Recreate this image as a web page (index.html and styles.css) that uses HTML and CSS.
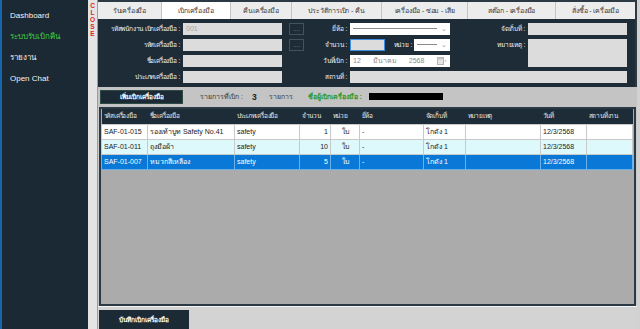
FILE: index.html
```html
<!DOCTYPE html>
<html lang="th">
	<head>
		<meta charset="UTF-8" />
		<meta name="viewport" content="width=device-width, initial-scale=1.0" />
		<title>เบิกเครื่องมือ</title>
		<link rel="stylesheet" href="styles.css">
	</head>
	<body>
		<div class="app">
			<!-- เมนูด้านซ้าย -->
			<aside class="sidebar">
				<a href="#" class="side-link">Dashboard</a>
				<a href="#" class="side-link active">ระบบรับเบิกคืน</a>
				<a href="#" class="side-link">รายงาน</a>
				<a href="#" class="side-link">Open Chat</a>
			</aside>

			<div class="close-strip">
				<span>C</span><span>L</span><span>O</span><span>S</span><span>E</span>
			</div>

			<main class="main">
				<!-- แท็บ -->
				<nav class="tabs">
					<a href="#" class="tab" style="width: 64px">รับเครื่องมือ</a>
					<a href="#" class="tab active" style="width: 69px">เบิกเครื่องมือ</a>
					<a href="#" class="tab" style="width: 61px">คืนเครื่องมือ</a>
					<a href="#" class="tab" style="width: 90px">ประวัติการเบิก - คืน</a>
					<a href="#" class="tab" style="width: 86px">เครื่องมือ - ซ่อม - เสีย</a>
					<a href="#" class="tab" style="width: 88px">สต๊อก - เครื่องมือ</a>
					<a href="#" class="tab last">สั่งซื้อ - เครื่องมือ</a>
				</nav>

				<!-- ฟอร์มเบิก -->
				<section class="form-panel">
					<label class="lbl">รหัสพนักงาน เบิกเครื่องมือ :</label>
					<div class="field muted">001</div>
					<div class="dots-cell"><span class="dots">....</span></div>
					<label class="lbl">ยี่ห้อ :</label>
					<div class="select"><span class="dash"></span><span class="caret">⌄</span></div>
					<label class="lbl">จัดเก็บที่ :</label>
					<div class="field"></div>

					<label class="lbl">รหัสเครื่องมือ :</label>
					<div class="field"></div>
					<div class="dots-cell"><span class="dots">....</span></div>
					<label class="lbl">จำนวน :</label>
					<div class="qty-row">
						<div class="field qty"></div>
						<label class="lbl unit-lbl">หน่วย :</label>
						<div class="select unit"><span class="dash"></span><span class="caret">⌄</span></div>
					</div>
					<label class="lbl">หมายเหตุ :</label>
					<div class="field note"></div>

					<label class="lbl">ชื่อเครื่องมือ :</label>
					<div class="field"></div>
					<div></div>
					<label class="lbl">วันที่เบิก :</label>
					<div class="date">
						<span>12</span><span>มีนาคม</span><span>2568</span>
						<svg class="cal" width="10" height="8" viewBox="0 0 10 8">
							<rect x="0.5" y="0.5" width="6" height="7" fill="#e6e6e6" stroke="#b4b4b4" />
							<rect x="0.5" y="0.5" width="6" height="2" fill="#c4c4c4" />
							<path d="M7.5 3.5 L9.5 3.5 L8.5 4.8 Z" fill="#a0a0a0" />
						</svg>
					</div>
					<div></div>

					<label class="lbl">ประเภทเครื่องมือ :</label>
					<div class="field"></div>
					<div></div>
					<label class="lbl">สถานที่ :</label>
					<div class="field place"></div>
				</section>

				<!-- แถบปุ่ม -->
				<div class="toolbar">
					<button class="btn-dark">เพิ่มเบิกเครื่องมือ</button>
					<span class="count-lbl">รายการที่เบิก :</span>
					<span class="count">3</span>
					<span class="count-lbl">รายการ</span>
					<span class="requester">ชื่อผู้เบิกเครื่องมือ :</span>
					<span class="redacted"></span>
				</div>

				<!-- ตารางรายการ -->
				<div class="table-box">
					<table class="grid">
						<colgroup>
							<col style="width: 46px" />
							<col style="width: 87px" />
							<col style="width: 65px" />
							<col style="width: 31px" />
							<col style="width: 29px" />
							<col style="width: 64px" />
							<col style="width: 42px" />
							<col style="width: 75px" />
							<col style="width: 46px" />
							<col style="width: 46px" />
						</colgroup>
						<thead>
							<tr>
								<th>รหัสเครื่องมือ</th>
								<th>ชื่อเครื่องมือ</th>
								<th>ประเภทเครื่องมือ</th>
								<th>จำนวน</th>
								<th>หน่วย</th>
								<th>ยี่ห้อ</th>
								<th>จัดเก็บที่</th>
								<th>หมายเหตุ</th>
								<th>วันที่</th>
								<th>สถานที่งาน</th>
							</tr>
						</thead>
						<tbody>
							<tr>
								<td>SAF-01-015</td>
								<td>รองเท้าบูท Safety No.41</td>
								<td>safety</td>
								<td class="num">1</td>
								<td class="center">ใบ</td>
								<td>-</td>
								<td>โกดัง 1</td>
								<td></td>
								<td>12/3/2568</td>
								<td></td>
							</tr>
							<tr class="alt">
								<td>SAF-01-011</td>
								<td>ถุงมือผ้า</td>
								<td>safety</td>
								<td class="num">10</td>
								<td class="center">ใบ</td>
								<td>-</td>
								<td>โกดัง 1</td>
								<td></td>
								<td>12/3/2568</td>
								<td></td>
							</tr>
							<tr class="selected">
								<td>SAF-01-007</td>
								<td>หมวกสีเหลือง</td>
								<td>safety</td>
								<td class="num">5</td>
								<td class="center">ใบ</td>
								<td>-</td>
								<td>โกดัง 1</td>
								<td></td>
								<td>12/3/2568</td>
								<td></td>
							</tr>
						</tbody>
					</table>
				</div>

				<div class="footer">
					<button class="btn-dark save">บันทึกเบิกเครื่องมือ</button>
				</div>
			</main>
		</div>
	</body>
</html>
```

FILE: styles.css
```css
/* 基本スタイル */
html,
body {
	margin: 0;
	padding: 0;
	width: 640px;
	height: 329px;
	overflow: hidden;
	background-color: #d2d2d2;
	font-family: "Liberation Sans", Tahoma, sans-serif;
	font-size: 7px;
}

.app {
	display: flex;
	width: 640px;
	height: 329px;
}

/* サイドバー */
.sidebar {
	width: 86px;
	flex-shrink: 0;
	background-color: #1b2934;
	border-left: 2px solid #1766ad;
	padding-top: 5px;
	display: flex;
	flex-direction: column;
}

.side-link {
	display: block;
	padding-left: 8px;
	line-height: 21px;
	font-size: 8px;
	color: #f2f2f2;
	text-decoration: none;
}

.side-link.active {
	color: #3fd13f;
}

.close-strip {
	width: 9px;
	flex-shrink: 0;
	background-color: #e4e4e4;
	display: flex;
	flex-direction: column;
	align-items: center;
	padding-top: 2px;
}

.close-strip span {
	color: #e01e25;
	font-weight: bold;
	font-size: 6.5px;
	line-height: 7px;
	height: 7px;
}

/* メイン */
.main {
	width: 539px;
	flex-shrink: 0;
	border-left: 1px solid #9c9c9c;
	display: flex;
	flex-direction: column;
	background-color: #c9c9c9;
}

.tabs {
	display: flex;
	height: 17px;
	border-top: 2px solid #2a3944;
	background-color: #ececec;
	border-right: 2px solid #2a3944;
}

.tab {
	display: flex;
	align-items: center;
	justify-content: center;
	flex-shrink: 0;
	border-right: 1px solid #c4c4c4;
	color: #3a3a3a;
	text-decoration: none;
	box-sizing: border-box;
	letter-spacing: -0.2px;
}

.tab.active {
	background-color: #ffffff;
}

.tab.last {
	flex: 1;
	border-right: none;
}

/* フォーム */
.form-panel {
	display: grid;
	grid-template-columns: 85px 99px 24px 44px 100px 78px 99px;
	grid-template-rows: repeat(4, 12px);
	row-gap: 4px;
	padding: 4px 0 4px 0;
	background-color: #1d2c37;
	border-right: 2px solid #2a3944;
}

.lbl {
	color: #f0f0f0;
	text-align: right;
	line-height: 12px;
	white-space: nowrap;
	padding-right: 3px;
	font-size: 6.5px;
	letter-spacing: -0.2px;
}

.field {
	background-color: #dcdcdc;
	color: #3a3a3a;
	line-height: 12px;
	padding-left: 3px;
}

.field.muted {
	color: #a6a6a6;
}

.dots-cell {
	display: flex;
	padding-left: 7px;
}

.dots {
	width: 15px;
	height: 12px;
	box-sizing: border-box;
	border: 1px solid #43535e;
	color: #9aa4aa;
	font-size: 6px;
	line-height: 11px;
	text-align: center;
}

.select {
	background-color: #ffffff;
	display: flex;
	align-items: center;
	padding: 0 3px;
	gap: 4px;
}

.dash {
	flex: 1;
	height: 1px;
	background-color: #8a8a8a;
}

.caret {
	color: #9a9a9a;
	font-size: 7px;
	line-height: 6px;
}

.qty-row {
	display: flex;
}

.field.qty {
	width: 35px;
	box-sizing: border-box;
	border: 1px solid #3b8ee0;
}

.unit-lbl {
	width: 27px;
	padding-right: 0;
	text-align: right;
}

.select.unit {
	flex: 1;
	margin-left: 2px;
}

.note {
	grid-column: 7;
	grid-row: 2 / 4;
}

.date {
	background-color: #ffffff;
	color: #8a8a8a;
	display: flex;
	align-items: center;
	padding-left: 3px;
	gap: 12px;
}

.date .cal {
	margin-left: auto;
	margin-right: 3px;
}

.place {
	grid-column: 5 / 8;
}

/* ツールバー */
.toolbar {
	display: flex;
	align-items: center;
	height: 20px;
	padding-left: 2px;
	background-color: #c4c4c4;
}

.btn-dark {
	background-color: #1b2a35;
	border: 1px solid #2e4a44;
	color: #ffffff;
	font-family: inherit;
	font-size: 6.5px;
	font-weight: bold;
	height: 14px;
	width: 83px;
	padding: 0;
	margin-right: 17px;
}

.count-lbl {
	color: #3c3c3c;
}

.count {
	font-weight: bold;
	font-size: 8.5px;
	color: #222;
	margin: 0 12px 0 9px;
}

.requester {
	color: #2e9a2e;
	font-weight: bold;
	margin-left: 15px;
}

.redacted {
	display: inline-block;
	width: 74px;
	height: 7px;
	background-color: #000;
	margin-left: 7px;
}

/* テーブル */
.table-box {
	height: 196px;
	margin-left: 1px;
	margin-right: 1px;
	border: 2px solid #2b3a45;
	background-color: #ababab;
}

.grid {
	border-collapse: collapse;
	table-layout: fixed;
	width: 531px;
}

.grid th {
	background-color: #1d2c37;
	color: #e6e6e6;
	font-weight: normal;
	font-size: 6.5px;
	letter-spacing: -0.2px;
	text-align: left;
	height: 15px;
	padding: 0 2px;
	white-space: nowrap;
}

.grid td {
	background-color: #ffffff;
	color: #1a1a1a;
	height: 14px;
	padding: 0 2px;
	border: 1px solid #c9c9c9;
	white-space: nowrap;
	overflow: hidden;
}

.grid tr.alt td {
	background-color: #def9fb;
}

.grid tr.selected td {
	background-color: #0a78d6;
	color: #ffffff;
	border-color: #6cb0ea;
}

.grid td.num {
	text-align: right;
}

.grid td.center {
	text-align: center;
}

/* フッター */
.footer {
	flex: 1;
	border-top: 1px solid #f4f4f4;
	background-color: #d3d3d3;
	padding-top: 3px;
}

.btn-dark.save {
	width: 90px;
	height: 19px;
	border: none;
	margin-left: 1px;
}
```
